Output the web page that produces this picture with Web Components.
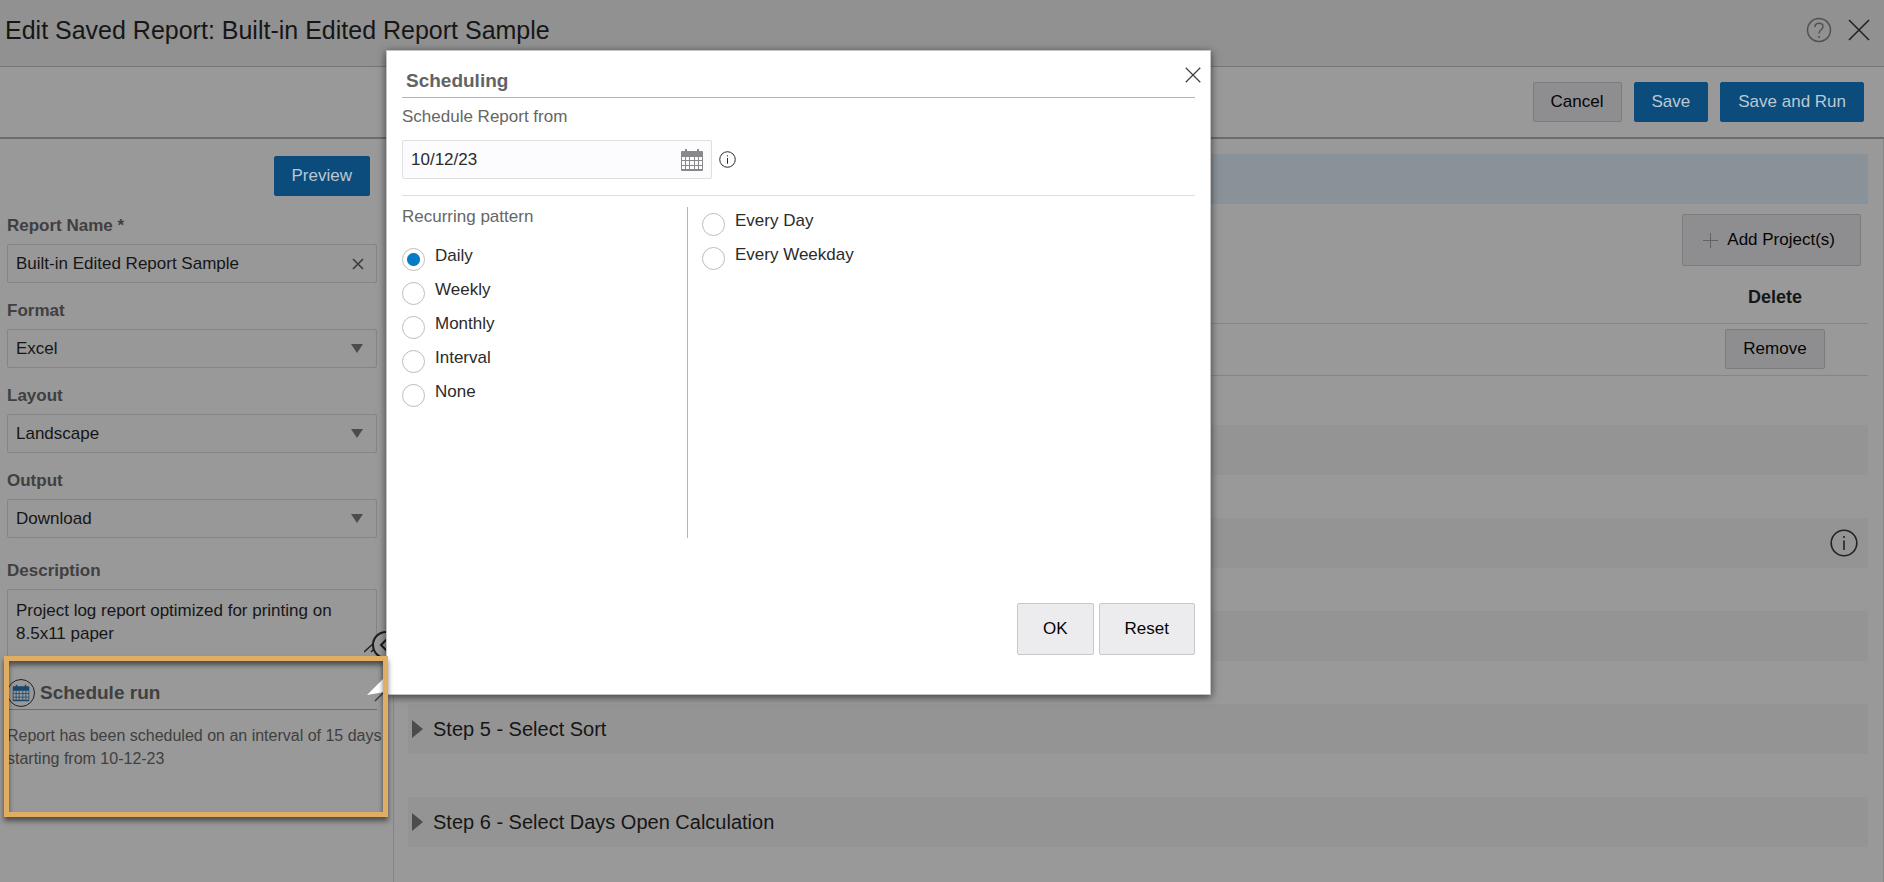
<!DOCTYPE html>
<html lang="en">
<head>
<meta charset="utf-8">
<title>Edit Saved Report</title>
<style>
  body {
    margin: 0;
    background: #999;
    color: #161616;
    font-family: "Liberation Sans", Arial, sans-serif;
    font-size: 17px;
    line-height: 20px;
    --blue: #0b4c7d;
    --line: #858585;
  }
</style>
</head>
<body>
<report-app></report-app>

<script>
// small helper: open shadow root filled from markup
function render(el, html) {
  el.attachShadow({ mode: "open" }).innerHTML = html;
}

const ICONS = {
  calendar: `
    <svg viewBox="0 0 24 24" width="100%" height="100%">
      <path fill="currentColor" fill-rule="evenodd" d="M2 3h3V1h2v2h10V1h2v2h3q1 0 1 1v18q0 1-1 1H2q-1 0-1-1V4q0-1 1-1z
        M2 9v3h3V9z M6 9v3h3V9z M10 9v3h4V9z M15 9v3h3V9z M19 9v3h3V9z
        M2 13v4h3v-4z M6 13v4h3v-4z M10 13v4h4v-4z M15 13v4h3v-4z M19 13v4h3v-4z
        M2 18v3h3v-3z M6 18v3h3v-3z M10 18v3h4v-3z M15 18v3h3v-3z M19 18v3h3v-3z"/>
    </svg>`,
  info: `
    <svg viewBox="0 0 28 28" width="100%" height="100%" fill="none" stroke="currentColor" stroke-width="1.6">
      <circle cx="14" cy="14" r="12.8"/>
      <path d="M14 11.5v9.500M14 7v2"/>
    </svg>`,
  close: `
    <svg viewBox="0 0 22 22" width="100%" height="100%" fill="none" stroke="currentColor" stroke-width="1.6">
      <path d="M1 1l20 20M21 1L1 21"/>
    </svg>`,
  clear: `
    <svg viewBox="0 0 12 12" width="100%" height="100%" fill="none" stroke="currentColor" stroke-width="1.6">
      <path d="M1 1l10 10M11 1L1 11"/>
    </svg>`,
  help: `
    <svg viewBox="0 0 26 26" width="100%" height="100%" fill="none" stroke="currentColor" stroke-width="1.5">
      <circle cx="13" cy="13" r="11.5"/>
      <path d="M9 10c0-5 8-5 8-.5 0 3.5-4 3-4 7M13 19v2"/>
    </svg>`
};

/* ---------- BUTTON ---------- */
class UiButton extends HTMLElement {
  connectedCallback() {
    render(this, `
      <style>
        :host { display: inline-block; }
        button {
          display: flex;
          align-items: center;
          justify-content: center;
          box-sizing: border-box;
          width: 100%;
          height: 40px;
          padding: 0 17px;
          border: 1px solid #7c7c7e;
          border-radius: 2px;
          background: #8e8e91;
          color: #050505;
          font: inherit;
          cursor: pointer;
        }
        :host([variant="primary"]) button {
          border-color: var(--blue);
          background: var(--blue);
          color: #bcc8d1;
        }
        :host([size="large"]) button { height: 52px; padding: 0 25px; }
        :host([size="wide"]) button { height: 52px; padding: 0 25px 0 20px; }
        :host([variant="light"]) button { border-color: #c8c8ca; background: #ececee; }
      </style>
      <button type="button"><slot></slot></button>
    `);
  }
}

/* ---------- ICON BUTTON ---------- */
class IconButton extends HTMLElement {
  connectedCallback() {
    render(this, `
      <style>
        :host { display: block; width: 24px; height: 24px; color: #222; }
        button {
          display: block;
          width: 100%;
          height: 100%;
          padding: 0;
          border: 0;
          background: none;
          color: inherit;
          cursor: pointer;
        }
        svg { display: block; }
      </style>
      <button type="button" aria-label="${this.getAttribute("label")}">${ICONS[this.getAttribute("icon")]}</button>
    `);
  }
}

/* ---------- FORM FIELD (text, select, textarea) ---------- */
class FormField extends HTMLElement {
  connectedCallback() {
    const type = this.getAttribute("type");
    const value = this.getAttribute("value");
    let control = `<input id="control" type="text" value="${value}"><icon-button icon="clear" label="Clear"></icon-button>`;
    if (type === "select") {
      control = `
        <select id="control"><option>${value}</option></select>
        <svg class="arrow" width="12" height="9"><path fill="#4c4c4e" d="M0 0h12L6 9z"/></svg>`;
    } else if (type === "textarea") {
      control = `
        <textarea id="control">${value}</textarea>
        <svg class="grip" width="12" height="12"><path stroke="#222" stroke-width="1.5" d="M0 11L11 1M7 11l5-5"/></svg>`;
    }
    render(this, `
      <style>
        :host { display: block; }
        label { display: block; margin-bottom: 8px; color: #404040; font-weight: bold; }
        .box {
          position: relative;
          display: flex;
          align-items: center;
          box-sizing: border-box;
          height: 39px;
          border: 1px solid var(--line);
          border-radius: 2px;
          background: #989899;
        }
        :host([type="textarea"]) .box { height: 68px; }
        input, select, textarea {
          flex: 1;
          min-width: 0;
          height: 100%;
          box-sizing: border-box;
          padding: 0 8px;
          border: 0;
          outline: 0;
          appearance: none;
          background: none;
          color: inherit;
          font: inherit;
        }
        select { padding-right: 30px; }
        textarea { padding: 9px 8px 0; resize: none; overflow: hidden; line-height: 23px; }
        icon-button { width: 12px; height: 12px; margin-right: 12px; color: #3c3c3c; }
        .arrow { position: absolute; right: 13px; pointer-events: none; }
        .grip { position: absolute; right: 0; bottom: 3px; }
      </style>
      <label for="control">${this.getAttribute("label")}</label>
      <div class="box">${control}</div>
    `);
  }
}

/* ---------- RADIO GROUP ---------- */
class RadioList extends HTMLElement {
  connectedCallback() {
    const name = this.getAttribute("name");
    const checked = this.getAttribute("checked");
    const items = this.getAttribute("options").split(",").map((text, i) => `
      <label for="${name}${i}">
        <input type="radio" id="${name}${i}" name="${name}" ${text === checked ? "checked" : ""}>
        <span>${text}</span>
      </label>`).join("");
    render(this, `
      <style>
        :host { display: block; color: #2b2b2b; }
        label { display: flex; align-items: flex-start; gap: 10px; height: 34px; }
        input {
          appearance: none;
          box-sizing: border-box;
          flex: none;
          width: 23px;
          height: 23px;
          margin: 2px 0 0;
          border: 1px solid #bdbdbd;
          border-radius: 50%;
          background: #fff;
        }
        input:checked { background: radial-gradient(circle, #067bc8 6px, #fff 7px); }
      </style>
      ${items}
    `);
  }
}

/* ---------- TITLE BAR + ACTIONS ---------- */
class ReportHeader extends HTMLElement {
  connectedCallback() {
    render(this, `
      <style>
        :host { display: block; }
        header {
          display: flex;
          align-items: center;
          gap: 16px;
          box-sizing: border-box;
          height: 67px;
          padding: 0 14px 6px 5px;
          border-bottom: 1px solid #767676;
          background: #919191;
        }
        h1 { flex: 1; margin: 0; font-size: 25px; line-height: 32px; font-weight: normal; }
        .help { width: 26px; height: 26px; color: #525252; }
        .close { width: 22px; height: 22px; }
        .actions {
          display: flex;
          justify-content: flex-end;
          gap: 12px;
          padding: 15px 20px;
          border-bottom: 2px solid #6c6c6c;
        }
      </style>
      <header>
        <h1>Edit Saved Report: Built-in Edited Report Sample</h1>
        <icon-button class="help" icon="help" label="Help"></icon-button>
        <icon-button class="close" icon="close" label="Close"></icon-button>
      </header>
      <div class="actions">
        <ui-button>Cancel</ui-button>
        <ui-button variant="primary">Save</ui-button>
        <ui-button variant="primary">Save and Run</ui-button>
      </div>
    `);
  }
}

/* ---------- SCHEDULE RUN ---------- */
class ScheduleRun extends HTMLElement {
  connectedCallback() {
    render(this, `
      <style>
        :host { display: block; position: relative; color: #404040; }
        .head {
          display: flex;
          align-items: center;
          gap: 5px;
          height: 33px;
          border-bottom: 1px solid #6e6e6e;
        }
        .icon {
          box-sizing: border-box;
          width: 28px;
          height: 28px;
          padding: 4px;
          border: 1px solid #222;
          border-radius: 50%;
        }
        .icon icon-button { width: 18px; height: 18px; color: #17466f; }
        h2 { margin: 0; font-size: 19px; line-height: 24px; }
        p { margin: 14px -8px 0 0; font-size: 16px; line-height: 23px; }
        /* highlight laid over the section */
        .frame {
          position: absolute;
          z-index: 3;
          inset: -20px -11px auto -3px;
          box-sizing: border-box;
          height: 161px;
          border: 5px solid #dfad63;
          box-shadow: 0 4px 5px rgba(0, 0, 0, .5), inset 0 4px 5px rgba(0, 0, 0, .5);
          pointer-events: none;
        }
      </style>
      <div class="head">
        <div class="icon"><icon-button icon="calendar" label="Schedule"></icon-button></div>
        <h2>Schedule run</h2>
      </div>
      <p>Report has been scheduled on an interval of 15 days starting from 10-12-23</p>
      <div class="frame"></div>
    `);
  }
}

/* ---------- SIDEBAR ---------- */
class ReportSidebar extends HTMLElement {
  connectedCallback() {
    render(this, `
      <style>
        :host {
          display: block;
          position: relative;
          box-sizing: border-box;
          padding: 17px 16px 0 7px;
          border-right: 1px solid #858585;
        }
        .top { display: flex; justify-content: flex-end; padding-right: 7px; margin-bottom: 20px; }
        .fields { display: grid; gap: 18px; }
        .description { margin-top: 23px; }
        schedule-run { margin-top: 19px; }
        .collapse {
          position: absolute;
          top: 492px;
          right: -7px;
          width: 28px;
          height: 28px;
          padding: 0;
          border: 2px solid #1c1c1c;
          border-radius: 50%;
          background: #999;
        }
        .collapse svg { display: block; }
      </style>
      <div class="top"><ui-button variant="primary">Preview</ui-button></div>
      <div class="fields">
        <form-field label="Report Name *" value="Built-in Edited Report Sample"></form-field>
        <form-field type="select" label="Format" value="Excel"></form-field>
        <form-field type="select" label="Layout" value="Landscape"></form-field>
        <form-field type="select" label="Output" value="Download"></form-field>
      </div>
      <form-field class="description" type="textarea" label="Description"
        value="Project log report optimized for printing on 8.5x11 paper"></form-field>
      <schedule-run></schedule-run>
      <button class="collapse" type="button" aria-label="Collapse">
        <svg width="24" height="24" fill="none" stroke="#1c1c1c" stroke-width="2"><path d="M13 6l-6 6 6 6"/></svg>
      </button>
    `);
  }
}

/* ---------- COLLAPSED STEP ---------- */
class StepPanel extends HTMLElement {
  connectedCallback() {
    render(this, `
      <style>
        :host {
          display: flex;
          align-items: center;
          gap: 10px;
          box-sizing: border-box;
          height: 50px;
          padding: 0 10px 0 4px;
          background: #949494;
          font-size: 20px;
          line-height: 24px;
        }
        :host([active]) { background: #8a9299; }
        svg { display: block; }
        span { flex: 1; }
        .info { width: 28px; height: 28px; }
      </style>
      <svg width="11" height="18"><path fill="#4c4c4e" d="M0 0l11 9-11 9z"/></svg>
      <span><slot></slot></span>
      ${this.hasAttribute("info") ? `<icon-button class="info" icon="info" label="Information"></icon-button>` : ""}
    `);
  }
}

/* ---------- STEPS ---------- */
class ReportSteps extends HTMLElement {
  connectedCallback() {
    render(this, `
      <style>
        :host {
          display: block;
          box-sizing: border-box;
          padding: 15px 15px 0 14px;
          border-right: 1px solid #858585;
        }
        .add { display: flex; justify-content: flex-end; padding: 10px 7px 0 0; }
        .add svg { margin-right: 9px; }
        table { width: 100%; border-collapse: collapse; margin-bottom: 49px; }
        th, td { box-sizing: border-box; padding: 0; border-bottom: 1px solid var(--line); text-align: center; }
        th { height: 57px; padding-top: 5px; font-size: 18px; }
        td { height: 52px; }
        th:last-child { width: 186px; }
        td ui-button { vertical-align: middle; }
        .steps { display: grid; gap: 43px; }
      </style>
      <step-panel active></step-panel>
      <div class="add">
        <ui-button size="wide">
          <svg width="15" height="15" stroke="#626262"><path d="M7.5 0v15M0 7.5h15"/></svg>Add Project(s)
        </ui-button>
      </div>
      <table>
        <thead><tr><th></th><th scope="col">Delete</th></tr></thead>
        <tbody><tr><td></td><td><ui-button>Remove</ui-button></td></tr></tbody>
      </table>
      <div class="steps">
        <step-panel></step-panel>
        <step-panel info></step-panel>
        <step-panel></step-panel>
        <step-panel>Step 5 - Select Sort</step-panel>
        <step-panel>Step 6 - Select Days Open Calculation</step-panel>
      </div>
    `);
  }
}

/* ---------- SCHEDULING DIALOG ---------- */
class ScheduleDialog extends HTMLElement {
  connectedCallback() {
    render(this, `
      <style>
        :host {
          position: absolute;
          z-index: 2;
          top: 50px;
          left: 386px;
          box-sizing: border-box;
          width: 825px;
          max-width: calc(100vw - 400px);
          padding: 15px 15px 39px;
          border: 1px solid #c4c4c4;
          background: #fff;
          box-shadow: 0 2px 8px rgba(0, 0, 0, .6);
          color: #666;
        }
        h2 {
          margin: 0 0 9px;
          padding: 3px 4px 4px;
          border-bottom: 1px solid #b4b4b4;
          color: #636363;
          font-size: 19px;
          line-height: 24px;
        }
        .close { position: absolute; top: 16px; right: 9px; width: 16px; height: 16px; color: #3a3a3a; }
        .date { display: flex; align-items: center; gap: 7px; margin-top: 13px; }
        .box {
          display: flex;
          align-items: center;
          box-sizing: border-box;
          width: 310px;
          height: 39px;
          padding: 0 7px 0 8px;
          border: 1px solid #dfdfe1;
          border-radius: 2px;
          background: #fcfcfe;
        }
        input {
          flex: 1;
          min-width: 0;
          padding: 0;
          border: 0;
          outline: 0;
          background: none;
          color: #2b2b2b;
          font: inherit;
        }
        .box icon-button { width: 24px; height: 24px; color: #88888a; }
        .date .info { width: 17px; height: 17px; }
        .pattern {
          display: flex;
          margin-top: 16px;
          padding-top: 11px;
          border-top: 1px solid #dedede;
        }
        .left { box-sizing: border-box; width: 286px; height: 331px; border-right: 1px solid #b4b4b4; }
        .left radio-list { margin-top: 19px; }
        .right { padding: 4px 0 0 14px; }
        .buttons { display: flex; justify-content: flex-end; gap: 5px; margin-top: 65px; }
        /* pointer towards the schedule icon */
        .tail { position: absolute; left: -20px; top: 626px; }
      </style>
      <h2>Scheduling</h2>
      <icon-button class="close" icon="close" label="Close"></icon-button>
      <label for="from">Schedule Report from</label>
      <div class="date">
        <div class="box">
          <input id="from" type="text" value="10/12/23">
          <icon-button icon="calendar" label="Choose date"></icon-button>
        </div>
        <icon-button class="info" icon="info" label="Information"></icon-button>
      </div>
      <div class="pattern">
        <div class="left">
          <div>Recurring pattern</div>
          <radio-list name="pattern" options="Daily,Weekly,Monthly,Interval,None" checked="Daily"></radio-list>
        </div>
        <div class="right">
          <radio-list name="every" options="Every Day,Every Weekday"></radio-list>
        </div>
      </div>
      <div class="buttons">
        <ui-button variant="light" size="large">OK</ui-button>
        <ui-button variant="light" size="large">Reset</ui-button>
      </div>
      <svg class="tail" width="20" height="26">
        <path fill="#fff" d="M0 18L18 0v15z"/>
        <path stroke="#2c3c48" stroke-width="1.5" d="M8 24l9-9"/>
      </svg>
    `);
  }
}

/* ---------- PAGE ---------- */
class ReportApp extends HTMLElement {
  connectedCallback() {
    render(this, `
      <style>
        :host { display: flex; flex-direction: column; min-height: 100vh; }
        main { display: grid; grid-template-columns: 394px 1fr; flex: 1; }
      </style>
      <report-header></report-header>
      <main>
        <report-sidebar></report-sidebar>
        <report-steps></report-steps>
      </main>
      <schedule-dialog></schedule-dialog>
    `);
  }
}

customElements.define("ui-button", UiButton);
customElements.define("icon-button", IconButton);
customElements.define("form-field", FormField);
customElements.define("radio-list", RadioList);
customElements.define("report-header", ReportHeader);
customElements.define("schedule-run", ScheduleRun);
customElements.define("report-sidebar", ReportSidebar);
customElements.define("step-panel", StepPanel);
customElements.define("report-steps", ReportSteps);
customElements.define("schedule-dialog", ScheduleDialog);
customElements.define("report-app", ReportApp);
</script>
</body>
</html>
